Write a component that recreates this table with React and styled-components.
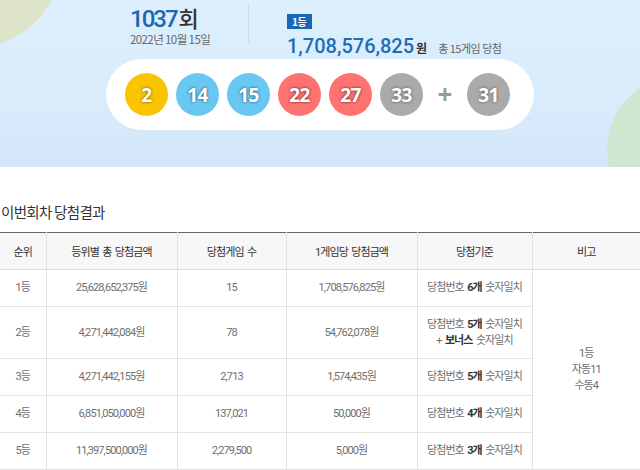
import React from 'react';
import styled, { createGlobalStyle } from 'styled-components';

const GlobalStyle = createGlobalStyle`
  html, body { margin: 0; padding: 0; background: #fff; }
  body {
    width: 640px; height: 470px; overflow: hidden;
    font-family: "Noto Sans CJK KR", "Noto Sans", sans-serif;
  }
`;

const Page = styled.div`
  width: 640px;
`;

const Banner = styled.section`
  position: relative;
  height: 167px;
  overflow: hidden;
  background: linear-gradient(180deg, #ddeffd 0%, #d9ecfc 60%, #d2e6f9 100%);
`;

const DecoCircle = styled.div`
  position: absolute;
  border-radius: 50%;
  width: ${p => p.$size}px;
  height: ${p => p.$size}px;
  left: ${p => p.$x}px;
  top: ${p => p.$y}px;
  background: ${p => p.$color};
`;

const BannerInner = styled.div`
  position: relative;
  z-index: 1;
`;

const InfoRow = styled.div`
  display: flex;
  align-items: flex-start;
  height: 59px;
  padding-left: 130px;
  box-sizing: border-box;
`;

const LeftBlock = styled.div`
  width: 118px;
  padding-top: 4px;
`;

const Round = styled.div`
  font-family: Roboto, "Noto Sans CJK KR", sans-serif;
  font-size: 24px;
  font-weight: 500;
  line-height: 26px;
  height: 26px;
  color: #1a69ad;
  letter-spacing: -2px;
  white-space: nowrap;
`;

const RoundUnit = styled.span`
  font-family: "Noto Sans CJK KR", sans-serif;
  font-size: 22px;
  font-weight: 500;
  color: #333;
  letter-spacing: 0;
  margin-left: 2px;
`;

const DateText = styled.div`
  margin-top: 2px;
  font-size: 11.5px;
  line-height: 14px;
  color: #666;
  letter-spacing: -0.6px;
  white-space: nowrap;
`;

const Divider = styled.div`
  width: 1px;
  height: 38px;
  margin-top: 5px;
  background: #c5d9ea;
`;

const RightBlock = styled.div`
  margin-left: 38px;
  padding-top: 7px;
`;

const Badge = styled.span`
  display: inline-block;
  height: 15px;
  line-height: 15px;
  padding: 0 5px;
  background: #1767b6;
  color: #fff;
  font-size: 10px;
  font-weight: 700;
  letter-spacing: -0.3px;
`;

const AmountLine = styled.div`
  display: flex;
  align-items: baseline;
  margin-top: 3px;
  white-space: nowrap;
`;

const Amount = styled.span`
  font-family: Roboto, sans-serif;
  font-size: 20px;
  font-weight: 500;
  line-height: 24px;
  color: #1c6db6;
`;

const Won = styled.span`
  margin-left: 2px;
  font-size: 12px;
  font-weight: 700;
  color: #333;
`;

const TotalGames = styled.span`
  margin-left: 11px;
  font-size: 11px;
  color: #666;
  letter-spacing: -0.5px;
`;

const Pill = styled.div`
  display: flex;
  align-items: center;
  gap: 8px;
  width: 428px;
  height: 71px;
  margin: 0 auto;
  padding-left: 19px;
  box-sizing: border-box;
  background: #fff;
  border-radius: 36px;
`;

const ballColors = {
  yellow: ['#fbc400', 'rgba(73,57,0,.8)'],
  blue: ['#69c8f2', 'rgba(0,49,70,.8)'],
  red: ['#ff7272', 'rgba(64,0,0,.8)'],
  gray: ['#aaaaaa', 'rgba(61,61,61,.8)'],
};

const Ball = styled.span`
  display: flex;
  align-items: center;
  justify-content: center;
  width: 43px;
  height: 43px;
  border-radius: 50%;
  flex: none;
  background: ${p => ballColors[p.$tone][0]};
  color: #fff;
  font-family: "Noto Sans", sans-serif;
  font-size: 19px;
  font-weight: 700;
  letter-spacing: -0.5px;
  text-shadow: 0 0 3px ${p => ballColors[p.$tone][1]};
`;

const Plus = styled.span`
  width: 28px;
  text-align: center;
  font-family: "Noto Sans", sans-serif;
  font-size: 26px;
  font-weight: 700;
  line-height: 43px;
  color: #999;
`;

const SectionTitle = styled.h2`
  margin: 35px 0 10px 1px;
  font-size: 14.5px;
  line-height: 20px;
  font-weight: 400;
  color: #333;
  letter-spacing: -0.7px;
`;

const Table = styled.table`
  width: 640px;
  table-layout: fixed;
  border-collapse: collapse;
  border-top: 1px solid #666;
  font-family: Roboto, "Noto Sans CJK KR", sans-serif;
  font-size: 11px;
  letter-spacing: -0.9px;
  word-spacing: 1.5px;
`;

const Th = styled.th`
  height: 36px;
  padding: 0;
  background: #f7f7f7;
  color: #333;
  font-weight: 400;
  border-left: 1px solid #e3e3e3;
  border-bottom: 1px solid #dcdcdc;
  &:first-child { border-left: none; }
`;

const Tr = styled.tr`
  height: ${p => (p.$tall ? 52 : 37)}px;
`;

const Td = styled.td`
  padding: 0;
  text-align: center;
  vertical-align: middle;
  color: #707070;
  line-height: 16px;
  border-left: 1px solid #e3e3e3;
  border-bottom: 1px solid #e3e3e3;
  background: #fff;
  &:first-child { border-left: none; }
`;

const Em = styled.strong`
  color: #333;
  font-weight: 700;
`;

const balls = [
  { n: 2, tone: 'yellow' },
  { n: 14, tone: 'blue' },
  { n: 15, tone: 'blue' },
  { n: 22, tone: 'red' },
  { n: 27, tone: 'red' },
  { n: 33, tone: 'gray' },
];

const rows = [
  { rank: '1등', total: '25,628,652,375원', count: '15', per: '1,708,576,825원', crit: <>당첨번호 <Em>6개</Em> 숫자일치</> },
  { rank: '2등', total: '4,271,442,084원', count: '78', per: '54,762,078원', tall: true, crit: <>당첨번호 <Em>5개</Em> 숫자일치<br />+ <Em>보너스</Em> 숫자일치</> },
  { rank: '3등', total: '4,271,442,155원', count: '2,713', per: '1,574,435원', crit: <>당첨번호 <Em>5개</Em> 숫자일치</> },
  { rank: '4등', total: '6,851,050,000원', count: '137,021', per: '50,000원', crit: <>당첨번호 <Em>4개</Em> 숫자일치</> },
  { rank: '5등', total: '11,397,500,000원', count: '2,279,500', per: '5,000원', crit: <>당첨번호 <Em>3개</Em> 숫자일치</> },
];

export default function App() {
  return (
    <Page>
      <GlobalStyle />
      <Banner>
        <DecoCircle $size={180} $x={-118} $y={-132} $color="#dee4c8" />
        <DecoCircle $size={150} $x={607} $y={75} $color="#cfe7d1" />
        <BannerInner>
          <InfoRow>
            <LeftBlock>
              <Round>1037<RoundUnit>회</RoundUnit></Round>
              <DateText>2022년 10월 15일</DateText>
            </LeftBlock>
            <Divider />
            <RightBlock>
              <Badge>1등</Badge>
              <AmountLine>
                <Amount>1,708,576,825</Amount>
                <Won>원</Won>
                <TotalGames>총 15게임 당첨</TotalGames>
              </AmountLine>
            </RightBlock>
          </InfoRow>
          <Pill>
            {balls.map(b => (
              <Ball key={b.n} $tone={b.tone}>{b.n}</Ball>
            ))}
            <Plus>+</Plus>
            <Ball $tone="gray">31</Ball>
          </Pill>
        </BannerInner>
      </Banner>

      <SectionTitle>이번회차 당첨결과</SectionTitle>
      <Table>
        <colgroup>
          <col style={{ width: 46 }} />
          <col style={{ width: 131 }} />
          <col style={{ width: 109 }} />
          <col style={{ width: 131 }} />
          <col style={{ width: 115 }} />
          <col style={{ width: 108 }} />
        </colgroup>
        <thead>
          <tr>
            <Th>순위</Th>
            <Th>등위별 총 당첨금액</Th>
            <Th>당첨게임 수</Th>
            <Th>1게임당 당첨금액</Th>
            <Th>당첨기준</Th>
            <Th>비고</Th>
          </tr>
        </thead>
        <tbody>
          {rows.map((r, i) => (
            <Tr key={r.rank} $tall={r.tall}>
              <Td>{r.rank}</Td>
              <Td>{r.total}</Td>
              <Td>{r.count}</Td>
              <Td>{r.per}</Td>
              <Td>{r.crit}</Td>
              {i === 0 && (
                <Td rowSpan={5}>1등<br />자동11<br />수동4</Td>
              )}
            </Tr>
          ))}
        </tbody>
      </Table>
    </Page>
  );
}
